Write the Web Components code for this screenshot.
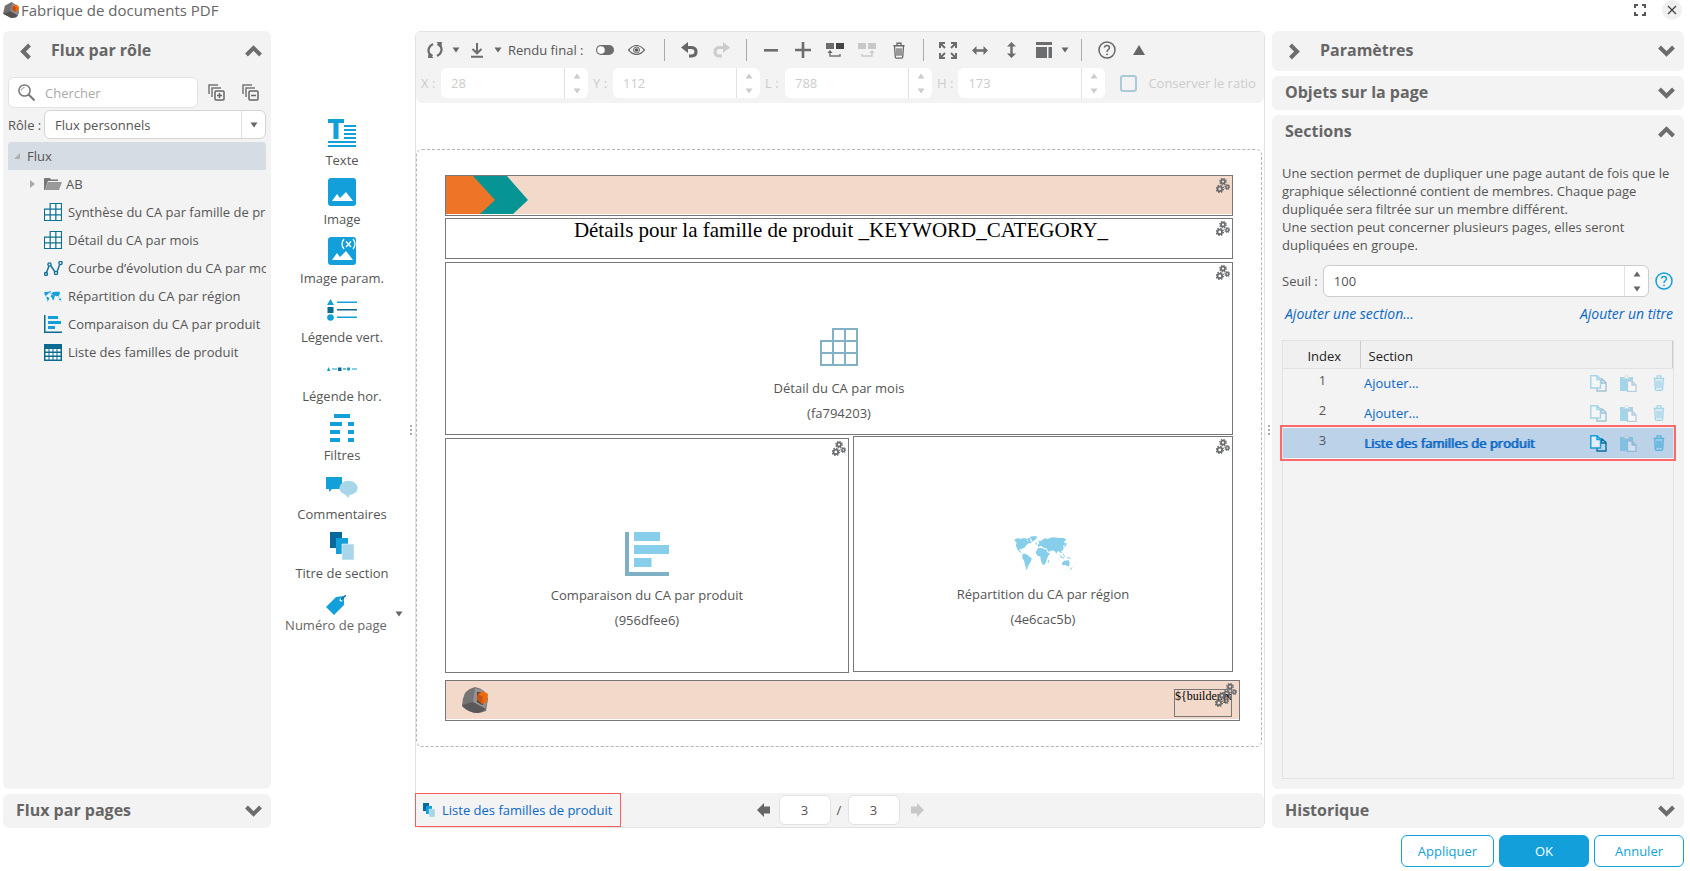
<!DOCTYPE html>
<html lang="fr">
<head>
<meta charset="utf-8">
<title>Fabrique de documents PDF</title>
<style>
  html { height: 100%; }
  body {
    margin: 0; min-height: 100%; background: #fff; color: #555;
    font: 13px/18px "Open Sans", sans-serif;
  }
</style>
</head>
<body>
<pdf-factory></pdf-factory>

<script>
const BLUE = '#129fda', DARK = '#0b6a92', GREY = '#6b6d6f';

const gear = (x, y, r, w) =>
  `<circle cx="${x}" cy="${y}" r="${r}" fill="none" stroke="currentColor" stroke-width="${w}"/>` +
  `<circle cx="${x}" cy="${y}" r="${r + w * .7}" fill="none" stroke="currentColor" stroke-width="${w * .8}" stroke-dasharray="${(r + w * .7) * Math.PI / 8}"/>`;

const WORLD = `<path d="M0 11 8 7 20 8 30 6 40 9 38 14 45 16 44 22 37 27 32 33 30 38 25 36 22 41 18 39 15 43 19 46 23 50 19 51 12 45 8 38 5 29 7 20 3 17z
 M46 3 60 0 70 2 66 9 58 15 54 17 52 9zM40 6 49 5 48 12 53 20 47 23 42 17z
 M25 54 34 54 41 58 53 68 50 77 46 84 41 92 39 102 36 101 33 89 30 76 24 66z
 M68 42 73 36 84 36 90 40 96 40 101 50 108 52 102 62 98 70 97 79 91 87 85 86 80 73 79 62 70 60 65 52z
 M104 71 106 74 104 82 101 81z M72 34 71 27 76 22 73 17 78 13 82 16 85 11 94 6 100 10 110 5 120 4 135 6 148 6 156 9 156 14 151 16 154 24 148 30 150 37 147 43 142 45 144 52 139 51 136 46 131 47 127 54 123 46 116 43 108 46 103 48 98 38 92 36 86 34 82 30 77 31z
 M156 20 159 22 157 29 153 34 151 31z M64 20 68 20 69 26 65 26z M137 55 144 63 151 66 149 69 140 64z M146 50 151 57 154 64 150 62z M158 63 170 67 172 70 163 68z
 M145 80 153 74 160 74 164 72 168 82 166 91 160 92 154 87 145 89z M168 101 177 93 175 98 170 103z"/>`;

const grid = (s, c) => `<g fill="#fff" fill-opacity=".7" stroke="${c}" stroke-width="${s}"><path d="M13 1H37V37H1V13H13zM1 25H37M13 13V37M25 1V37M13 13H37"/></g>`;

const SHEETS = (a, b, c) => `<path fill="${a}" d="M0 0h12v16H0z"/><path fill="${b}" d="M6 6h12v16H6z"/><path fill="${c}" stroke="#f3f7fa" stroke-width=".6" d="M12 12h12v16H12z"/>`;
const TRASH = `<path fill="none" stroke="currentColor" stroke-width="1.3" d="M.5 3.5h11M4 3V1h4v2M1.5 4l.8 11q.1.8 1 .8h5.4q.9 0 1-.8L10.500 4M4 6v7.500M6 6v7.500M8 6v7.500"/>`;
const MOUNT = `<rect width="28" height="28" rx="3" fill="${BLUE}"/><path fill="#fff" d="M4 23l5-7 3 4 6-6 7 9z"/>`;

/* name: [width, height, viewBox, markup] */
const ICONS = {
  logo: [16, 16, '0 0 26 26', `<path fill="#716f71" d="M3 6 14 0l10 7 2 11-4 6-8 2-14-7z"/><path fill="#8d8b8c" d="M12 15 15 1l9 6 2 4-2 12z"/><path fill="#545153" d="M0 19 12 15l12 7-3 3-8 1z"/><path fill="#eb6a10" d="M16 6l6-2 4 4-1 6-5 2-5-4z"/><path fill="#c04a10" d="M16 6l5 3-1 7-5-4z"/>`],
  logoBig: [26, 26, '0 0 26 26', `<path fill="#777476" d="M3 6Q6 2 13 0q5 1 9 4 3 4 4 8l-2 12q-5 2-10 2Q6 25 0 19 0 12 3 6z"/><path fill="#949293" d="M11 15 13 1l9 3 3 10-2 9z"/><path fill="#5b585a" d="M0 18 11 15l13 7q-4 3-8 4-8 0-15-6z"/><path fill="#544" d="M15 5h4l-3 8 6 4-2 1-5-3z"/><path fill="#eb6a10" d="M16 7l5-3 5 3-1 8-5 2-5-5z"/><path fill="#c8520f" d="M16 7l5 3-1 7-5-5z"/>`],
  full: [12, 12, '0 0 12 12', `<path fill="none" stroke="#555" stroke-width="2" d="M4 1H1v3M8 1h3v3M4 11H1V8M8 11h3V8"/>`],
  close: [10, 10, '0 0 10 10', `<path stroke="#444" stroke-width="1.300" d="M1 1l8 8M9 1L1 9"/>`],
  left: [11, 17, '0 0 11 17', `<path fill="none" stroke="${GREY}" stroke-width="4" d="M9.500 2 3 8.500l6.500 6.500"/>`],
  right: [11, 17, '0 0 11 17', `<path fill="none" stroke="${GREY}" stroke-width="4" d="M1.500 2 8 8.500l-6.500 6.500"/>`],
  up: [17, 12, '0 0 17 12', `<path fill="none" stroke="${GREY}" stroke-width="4" d="M1.500 10 8.500 3l7 7"/>`],
  down: [17, 12, '0 0 17 12', `<path fill="none" stroke="${GREY}" stroke-width="4" d="M1.500 2l7 7 7-7"/>`],
  search: [17, 17, '0 0 17 17', `<circle cx="6.500" cy="6.500" r="5.600" fill="none" stroke="#777" stroke-width="1.500"/><path fill="none" stroke="#999" d="M3.500 6.500q0-3 3-3"/><path stroke="#777" stroke-width="2" d="M10.500 10.500l6 6"/>`],
  expandAll: [17, 17, '0 0 17 17', `<path fill="none" stroke="#777" stroke-width="1.500" d="M1 10V1h9M4 13V4h9"/><rect x="7" y="7" width="9" height="9" rx="1" fill="none" stroke="#666" stroke-width="1.500"/><path stroke="#666" stroke-width="1.500" d="M9 11.500h5M11.500 9v5"/>`],
  collapseAll: [17, 17, '0 0 17 17', `<path fill="none" stroke="#777" stroke-width="1.500" d="M1 10V1h9M4 13V4h9"/><rect x="7" y="7" width="9" height="9" rx="1" fill="none" stroke="#666" stroke-width="1.500"/><path stroke="#666" stroke-width="1.500" d="M9 11.500h5"/>`],
  caret: [8, 6, '0 0 8 6', `<path fill="currentColor" d="M.5.500h7L4 5.500z"/>`],
  caretUp: [8, 6, '0 0 8 6', `<path fill="currentColor" d="M.5 5.500h7L4 .5z"/>`],
  opened: [6, 6, '0 0 6 6', `<path fill="#b0b0b0" d="M6 0v6H0z"/>`],
  closed: [5, 8, '0 0 5 8', `<path fill="#a8a8a8" d="M0 0l5 4-5 4z"/>`],
  folder: [18, 12, '0 0 18 12', `<path fill="#777" d="M0 1q0-1 1-1h5l1 1.500h7V3H4L1 12H0z"/><path fill="#999" d="M4 4h14l-3 8H1z"/>`],
  cube: [18, 18, '0 0 38 38', grid(2.600, '#0c7194')],
  cubeBig: [38, 38, '0 0 38 38', grid(2, '#82b1c6')],
  curve: [19, 15, '0 0 19 15', `<g fill="none" stroke="#0c7194" stroke-width="1.400"><path d="M2.500 11.500 5 5M7 5l4 6M13 11l2.500-7"/><circle cx="2" cy="13" r="1.500"/><circle cx="5.500" cy="3.500" r="1.600"/><circle cx="12" cy="12" r="1.600"/><circle cx="16.500" cy="2" r="1.600"/></g>`],
  world: [18, 11, '0 0 177 103', `<g fill="${BLUE}">${WORLD}</g>`],
  worldBig: [59, 34, '0 0 177 103', `<g fill="#87ceea">${WORLD}</g>`],
  bars: [18, 18, '0 0 18 18', `<path fill="${BLUE}" d="M4 1h10v3H4zM4 6h13v3H4zM4 11h7v3H4z"/><path fill="${DARK}" d="M0 0h1.500v16.500H18V18H0z"/>`],
  barsBig: [44, 44, '0 0 44 44', `<path fill="#87ceea" d="M9 0h26v9H9zM9 13h35v9H9zM9 26h17.500v9H9z"/><path fill="#7fb0c5" d="M0 0h4v40h40v4H0z"/>`],
  list: [18, 17, '0 0 18 17', `<rect width="18" height="17" fill="${DARK}"/><path fill="#fff" d="M1.500 5h3v2.500h-3zM5.500 5h3v2.500h-3zM9.500 5h3v2.500h-3zM13.500 5h3v2.500h-3zM1.500 9h3v2.500h-3zM5.500 9h3v2.500h-3zM9.500 9h3v2.500h-3zM13.500 9h3v2.500h-3zM1.500 13h3v2.500h-3zM5.500 13h3v2.500h-3zM9.500 13h3v2.500h-3zM13.500 13h3v2.500h-3z"/>`],
  text: [28, 28, '0 0 28 28', `<path fill="${BLUE}" d="M0 0h16v4h-5.500v16h-5V4H0zM16 6h12v2H16zM16 10h12v2H16zM16 14h12v2H16zM16 18h12v2H16zM0 22h28v2H0zM0 26h28v2H0z"/>`],
  image: [28, 28, '0 0 28 28', MOUNT],
  imageParam: [28, 28, '0 0 28 28', MOUNT + `<path fill="none" stroke="#fff" stroke-width="1.300" d="M16 2q-4 5 0 10M25 2q4 5 0 10M18 4.500l5 5.500M23 4.500l-5 5.500"/>`],
  legendV: [30, 22, '0 0 30 22', `<path fill="${BLUE}" d="M0 6 3.500 0 7 6zM10 2.500h20V4H10zM10 17.500h20V19H10z"/><path fill="${DARK}" d="M.5 8h6v6h-6zM10 10h20v1.500H10z"/><circle cx="3.500" cy="18.500" r="3.300" fill="${BLUE}"/>`],
  legendH: [30, 4, '0 0 30 4', `<path fill="${BLUE}" d="M0 4 1.500 0 3.500 4zM5 1.500h5v1H5zM25 1.500h5v1h-5z"/><path fill="${DARK}" d="M11 .5h3.500V4H11zM16 1.500h3v1h-3z"/><circle cx="21.500" cy="2" r="1.700" fill="${BLUE}"/>`],
  filters: [24, 28, '0 0 24 28', `<path fill="${BLUE}" d="M4 0h16v4H4zM0 8h12v4H0zM18 8h6v4h-6zM0 16h10v4H0zM18 16h6v4h-6zM0 24h10v4H0zM18 24h6v4h-6z"/>`],
  comments: [32, 21, '0 0 32 21', `<path fill="${BLUE}" d="M0 0h16v12H6l-3 3v-3H0z"/><ellipse cx="22.500" cy="11" rx="9.200" ry="7.200" fill="#a8d6e9"/><path fill="#a8d6e9" d="M19 17h5l-2 4z"/>`],
  sheets: [24, 28, '0 0 24 28', SHEETS('#0a689c', BLUE, '#a8d6e9')],
  sheetsSmall: [12, 14, '0 0 24 28', SHEETS('#0a689c', BLUE, '#a8d6e9')],
  tag: [20, 20, '0 0 20 20', `<path fill="${BLUE}" d="M10 2 18 1l0 9L8 20 0 12z"/><circle cx="15" cy="5" r="1.500" fill="#fff"/><path stroke="${DARK}" stroke-width="1.300" d="M15 5l5-5"/>`],
  refresh: [16, 16, '0 0 16 16', `<path fill="none" stroke="${GREY}" stroke-width="2.200" d="M5.500 14Q0 11 2 6q1-2.500 4-4M10.500 2q5.500 3 3.500 8-1 2.500-4 4"/><path fill="${GREY}" d="M9.500 0H15l-.5 5.500zM6.500 16H1l.5-5.500z"/>`],
  download: [12, 16, '0 0 12 16', `<path fill="none" stroke="${GREY}" stroke-width="2" d="M6 1v10M1.500 7 6 11.300 10.500 7M0 14.800h12"/>`],
  toggle: [18, 10, '0 0 18 10', `<rect width="18" height="10" rx="5" fill="${GREY}"/><circle cx="5" cy="5" r="3.800" fill="#fff"/>`],
  eye: [17, 10, '0 0 17 10', `<path fill="none" stroke="#666" stroke-width="1.200" d="M.5 5q8-9 16 0-8 9-16 0z"/><circle cx="8.500" cy="5" r="3" fill="none" stroke="#666"/><circle cx="8.500" cy="5" r="1.800" fill="#555"/>`],
  undo: [17, 16, '0 0 17 16', `<path fill="none" stroke="currentColor" stroke-width="3.200" d="M5 5.500h5.500q4.500.3 4.500 4.200T10.500 14H8"/><path fill="currentColor" d="M0 5.500 7 0v11z"/>`],
  redo: [17, 16, '0 0 17 16', `<path fill="none" stroke="#ccc" stroke-width="3.200" d="M12 5.500H6.500Q2 5.800 2 9.700T6.500 14H9"/><path fill="#ccc" d="M17 5.500 10 0v11z"/>`],
  minus: [14, 3, '0 0 14 3', `<path fill="${GREY}" d="M0 0h14v2.600H0z"/>`],
  plus: [16, 16, '0 0 16 16', `<path fill="${GREY}" d="M6.700 0h2.600v6.700H16v2.600H9.300V16H6.700V9.300H0V6.700h6.700z"/>`],
  group: [18, 14, '0 0 18 14', `<path fill="#6b6d6f" d="M0 0h8v6H0z"/><path fill="#444" d="M10 0h8v6h-8z"/><path fill="none" stroke="#777" stroke-width="1.500" d="M4 8v5h10v-2"/><path fill="#666" d="M1.500 10 4 7l2.500 3z"/>`],
  ungroup: [18, 14, '0 0 18 14', `<path fill="#c8c8c8" d="M0 0h8v6H0zM10 0h8v6h-8z"/><path fill="none" stroke="#ccc" stroke-width="1.500" d="M4 11v2h10V9"/><path fill="#c8c8c8" d="M11.500 10 14 7l2.500 3z"/>`],
  trash: [12, 17, '0 0 12 16.500', TRASH],
  expand: [18, 17, '0 0 18 17', `<path fill="none" stroke="${GREY}" stroke-width="2" d="M6 1H1v5M12 1h5v5M1 11v5h5M17 11v5h-5M1 1l5 5M17 1l-5 5M1 16l5-5M17 16l-5-5"/>`],
  horiz: [16, 9, '0 0 16 9', `<path fill="${GREY}" d="M0 4.500 4.500 0v3.300h7V0L16 4.500 11.500 9V5.700h-7V9z"/>`],
  vert: [9, 16, '0 0 9 16', `<path fill="${GREY}" d="M4.500 0 9 4.500H5.700v7H9L4.500 16 0 11.500h3.300v-7H0z"/>`],
  layout: [16, 16, '0 0 16 16', `<path fill="${GREY}" d="M0 0h16v3H0zM0 5h11v11H0zM12.500 5H16v11h-3.500z"/>`],
  help: [18, 18, '0 0 18 18', `<circle cx="9" cy="9" r="8" fill="none" stroke="currentColor" stroke-width="1.500"/><path fill="none" stroke="currentColor" stroke-width="1.500" d="M6.500 6.500Q6.700 4.500 9 4.500t2.400 2Q11.400 8 10 9q-1 .7-1 2"/><circle cx="9" cy="13.300" r=".9" fill="currentColor"/>`],
  triangle: [12, 10, '0 0 12 10', `<path fill="#666" d="M6 0l6 10H0z"/>`],
  gears: [14, 15, '0 0 14 15', gear(7, 3.600, 2, 1.700) + gear(3.800, 10.900, 2.300, 1.800) + gear(11.300, 9, 1.500, 1.400)],
  prev: [13, 14, '0 0 13 14', `<path fill="#666" d="M0 7 7 0v3.500h6v7H7V14z"/>`],
  next: [13, 14, '0 0 13 14', `<path fill="#c8c8c8" d="M13 7 6 0v3.500H0v7h6V14z"/>`],
  copy: [17, 17, '0 0 17 17', `<path fill="none" stroke="#0b6f9c" stroke-width="1.400" d="M7 13v3h9V7.500L12 4h-2M11.500 4.500V8H16"/><path fill="#fff" fill-opacity=".6" stroke="${BLUE}" stroke-width="1.400" d="M.8.800H7l3.500 3.500V13H.8zM7 1v3.500h3.500"/>`],
  paste: [17, 17, '0 0 17 17', `<path fill="${BLUE}" d="M0 2h13v14H0z"/><path fill="#fff" stroke="#9ab" d="M3.500 3.500q0-1 1.500-1Q5 .5 6.500.5T8 2.500q1.500 0 1.500 1z"/><path fill="#fff" stroke="#4a8cb0" stroke-width="1.300" d="M7.500 6H12l4 4v6.300H7.500zM12 6v4h4"/>`],
  trashBlue: [12, 16, '0 0 12 16.500', `<g color="${BLUE}">${TRASH}</g><path fill="${BLUE}" fill-opacity=".25" d="M2 4h8v11H2z"/>`],
};

/* Registers an element whose open shadow root is filled by view(el). */
function element(name, css, view) {
  customElements.define(name, class extends HTMLElement {
    constructor() { super(); this.attachShadow({ mode: 'open' }); }
    connectedCallback() {
      const t = document.createElement('template');
      t.innerHTML = `<style>*{box-sizing:border-box}:host([hidden]){display:none}
        button,input,select{font:inherit;color:inherit;margin:0;border:0;background:none;padding:0;outline:0}
        a{color:#0a68c6;text-decoration:none}${css}</style>${view(this)}`;
      this.shadowRoot.replaceChildren(t.content.cloneNode(true));
    }
  });
}
const at = (el, n, d = '') => el.getAttribute(n) ?? d;

element('ui-icon', `:host{display:inline-flex;flex:none}svg{display:block}`, el => {
  const [w, h, box, body] = ICONS[at(el, 'name')];
  return `<svg width="${w}" height="${h}" viewBox="${box}" aria-hidden="true">${body}</svg>`;
});

element('icon-button', `
  :host{display:flex;flex:none;width:32px;height:32px}
  :host([slim]){width:10px}
  :host([fit]){width:auto;height:auto}
  button{flex:1;display:flex;align-items:center;justify-content:center;border-radius:50%}`,
  el => `<button type="button" aria-label="${at(el, 'label')}"><ui-icon name="${at(el, 'name')}"></ui-icon></button>`);

element('side-panel', `
  :host{display:flex;flex-direction:column;background:#f3f3f3;border-radius:6px}
  :host([grow]){flex:1}
  header{display:flex;align-items:center;height:34px;padding:0 9px 0 13px}
  header.lead{height:40px;padding-left:17px}
  .lead icon-button:first-child{width:11px;margin-right:20px}
  h2{flex:1;margin:0;padding-bottom:2px;font-size:16px;line-height:24px;font-weight:700;color:#666}`,
  el => `<header class="${at(el, 'lead') ? 'lead' : ''}">${at(el, 'lead') ? `<icon-button name="${at(el, 'lead')}" label="Déplacer"></icon-button>` : ''}
    <h2>${at(el, 'heading')}</h2><icon-button fit name="${el.hasAttribute('open') ? 'up' : 'down'}" label="Plier ou déplier"></icon-button></header><slot></slot>`);

element('number-field', `
  :host{display:flex;align-items:center;gap:5px}
  label{min-width:15px}
  .box{display:flex;flex:1;width:147px;height:30px;background:#fff;border-radius:6px;overflow:hidden}
  input{flex:1;min-width:0;padding:0 10px}
  .steps{width:24px;display:flex;flex-direction:column;border-left:1px solid #e2e2e2}
  .steps button{flex:1;display:flex;align-items:center;justify-content:center;color:#666}
  :host([disabled]){color:#ccc}
  :host([disabled]) button{color:#ccc}
  :host([framed]) .box{height:32px;border:1px solid #ccc}`,
  el => { const d = el.hasAttribute('disabled') ? 'disabled' : '';
    return `<label for="v">${at(el, 'label')}</label><div class="box"><input id="v" type="text" inputmode="numeric" value="${at(el, 'value')}" ${d}>
    <div class="steps"><button type="button" aria-label="Plus" ${d}><ui-icon name="caretUp"></ui-icon></button><button type="button" aria-label="Moins" ${d}><ui-icon name="caret"></ui-icon></button></div></div>`; });

element('flow-tree', `
  :host{display:block;margin:0 5px 0 5px}
  .root{display:flex;align-items:center;gap:7px;height:28px;padding-left:6px;background:#d6dce4;border-radius:4px 4px 0 0}
  ul{list-style:none;margin:0;padding:0}
  li{display:grid;grid-template-columns:20px 24px 1fr;align-items:center;height:28px;padding-left:16px}
  li.folder{grid-template-columns:5px 9px 22px 1fr;padding-left:22px}
  li ui-icon.ic{justify-self:start}
  span{white-space:nowrap;overflow:hidden}`,
  () => `<div class="root"><ui-icon name="opened"></ui-icon><span>Flux</span></div><ul>
    <li class="folder"><ui-icon name="closed"></ui-icon><i></i><ui-icon name="folder"></ui-icon><span>AB</span></li>
    ${[['cube', 'Synthèse du CA par famille de produit'], ['cube', 'Détail du CA par mois'], ['curve', 'Courbe d’évolution du CA par mois'], ['world', 'Répartition du CA par région'], ['bars', 'Comparaison du CA par produit'], ['list', 'Liste des familles de produit']]
      .map(([i, t]) => `<li><i></i><ui-icon class="ic" name="${i}"></ui-icon><span>${t}</span></li>`).join('')}</ul>`);

element('flow-browser', `
  :host{display:flex;flex-direction:column;gap:5px;width:268px;flex:none}
  .search{display:flex;align-items:center;margin:6px 5px 2px}
  .box{display:flex;align-items:center;gap:10px;width:190px;height:31px;padding-left:9px;background:#fff;border:1px solid #e2e2e2;border-radius:6px;margin-right:10px}
  input{flex:1;min-width:0}
  input::placeholder{color:#aaa;opacity:1}
  .search icon-button+icon-button{margin-left:17px}
  .role{display:flex;align-items:center;justify-content:space-between;margin:0 5px 3px;height:29px}
  .pick{display:grid;grid-template-columns:1fr 24px;width:222px;height:29px;background:#fff;border:1px solid #d4d4d4;border-radius:6px;align-items:center}
  select{grid-area:1/1/2/3;appearance:none;width:100%;height:27px;padding-left:10px}
  .arrow{grid-area:1/2;height:27px;display:flex;align-items:center;justify-content:center;border-left:1px solid #e0e0e0;pointer-events:none;color:#666}`,
  () => `<side-panel grow open lead="left" heading="Flux par rôle">
    <div class="search"><div class="box"><ui-icon name="search"></ui-icon><input type="text" placeholder="Chercher" aria-label="Chercher"></div>
      <icon-button fit name="expandAll" label="Tout déplier"></icon-button><icon-button fit name="collapseAll" label="Tout replier"></icon-button></div>
    <div class="role"><label for="role">Rôle :</label><div class="pick"><select id="role"><option>Flux personnels</option></select><span class="arrow"><ui-icon name="caret"></ui-icon></span></div></div>
    <flow-tree></flow-tree></side-panel>
    <side-panel heading="Flux par pages"></side-panel>`);

element('palette-item', `
  :host{display:block}
  button{display:flex;flex-direction:column;align-items:center;width:100%;height:59px}
  .ic{display:flex;align-items:center;height:32px;margin-bottom:2px}
  :host([compact]) button{height:48px;padding-top:6px}
  :host([compact]) .ic{height:20px;margin-bottom:1px}`,
  el => `<button type="button"><span class="ic"><ui-icon name="${at(el, 'icon')}"></ui-icon></span><span><slot></slot></span></button>`);

element('tool-palette', `
  :host{display:block;width:136px;flex:none;padding:86px 0 0 6px}
  .last{display:flex;justify-content:center;gap:8px;padding-left:4px;color:#666}
  .last icon-button{height:6px;margin-top:22px}`,
  () => [['text', 'Texte'], ['image', 'Image'], ['imageParam', 'Image param.'], ['legendV', 'Légende vert.'], ['legendH', 'Légende hor.'], ['filters', 'Filtres'], ['comments', 'Commentaires'], ['sheets', 'Titre de section']]
    .map(([i, t]) => `<palette-item icon="${i}">${t}</palette-item>`).join('') +
    `<div class="last"><palette-item compact icon="tag">Numéro de page</palette-item><icon-button fit name="caret" label="Autres"></icon-button></div>`);

element('split-handle', `
  :host{display:flex;flex:none;width:8px;flex-direction:column;align-items:center;justify-content:center;gap:2px}
  :host([thin]){width:7px}
  i{width:2px;height:2px;background:#aaa}`, () => `<i></i><i></i><i></i>`);

element('editor-toolbar', `
  :host{display:block;background:#f3f3f3;border-radius:6px;padding:2px 3px 5px;color:#666}
  .row{display:flex;align-items:center}
  .row+.row{padding:2px 2px 0;gap:5px}
  .txt{margin:0 5px;color:#555}
  hr{width:1px;height:22px;margin:0 8px;border:0;background:#aaa;flex:none}
  hr.wide{margin:0 9px 0 11px}
  .ratio{display:flex;align-items:center;gap:11px;margin-left:10px;color:#ccc;white-space:nowrap}
  input{appearance:none;width:17px;height:17px;border:2px solid #a9cbd9;border-radius:3px}`,
  () => `<div class="row">
    <icon-button name="refresh" label="Actualiser"></icon-button><icon-button slim name="caret" label="Options"></icon-button>
    <icon-button name="download" label="Télécharger"></icon-button><icon-button slim name="caret" label="Options"></icon-button>
    <span class="txt">Rendu final :</span><icon-button name="toggle" label="Rendu final"></icon-button><icon-button name="eye" label="Aperçu"></icon-button><hr class="wide">
    <icon-button name="undo" label="Annuler l’action"></icon-button><icon-button name="redo" label="Rétablir"></icon-button><hr>
    <icon-button name="minus" label="Réduire"></icon-button><icon-button name="plus" label="Agrandir"></icon-button><icon-button name="group" label="Grouper"></icon-button><icon-button name="ungroup" label="Dégrouper"></icon-button><icon-button name="trash" label="Supprimer"></icon-button><hr>
    <icon-button name="expand" label="Ajuster"></icon-button><icon-button name="horiz" label="Largeur"></icon-button><icon-button name="vert" label="Hauteur"></icon-button><icon-button name="layout" label="Disposition"></icon-button><icon-button slim name="caret" label="Options"></icon-button><hr class="wide">
    <icon-button name="help" label="Aide"></icon-button><icon-button name="triangle" label="Replier"></icon-button></div>
    <div class="row"><number-field disabled label="X :" value="28"></number-field><number-field disabled label="Y :" value="112"></number-field><number-field disabled label="L :" value="788"></number-field><number-field disabled label="H :" value="173"></number-field>
    <span class="ratio"><input type="checkbox" id="ratio" disabled><label for="ratio">Conserver le ratio</label></span></div>`);

/* An object placed on the document page; its box is x, y, width and height on the page. */
customElements.define('page-object', class extends HTMLElement {
  constructor() { super(); this.attachShadow({ mode: 'open' }); }
  connectedCallback() {
    const [x, y, w, h] = this.getAttribute('box').split(' ');
    const icon = this.getAttribute('icon');
    this.shadowRoot.innerHTML = `<style>
      :host{position:absolute;box-sizing:border-box;left:${x}px;top:${y}px;width:${w}px;height:${h}px;border:1px solid #777;display:block}
      .gears{position:absolute;top:2px;right:2px;color:#6b6d6f}
      .clip{height:100%;overflow:hidden}
      .body{box-sizing:border-box;height:100%;padding-top:54px;display:flex;flex-direction:column;align-items:center;justify-content:center;line-height:25px}
      .ic{height:44px;margin-bottom:7px;display:flex;align-items:center}</style>
      ${icon ? `<div class="body"><span class="ic"><ui-icon name="${icon}"></ui-icon></span><span>${this.getAttribute('label')}</span><span>(${this.getAttribute('ref')})</span></div>` : '<div class="clip"><slot></slot></div>'}
      <ui-icon class="gears" name="gears"></ui-icon>`;
  }
});

element('document-page', `
  :host{display:block;position:relative;width:846px;height:598px;flex:none;border:1px dashed #b4b4b4;border-radius:6px;box-sizing:border-box}
  .band{height:38px;background:#f2d9ca}
  .band svg{display:block}
  .foot{padding:6px 0 0 16px;height:38px}
  .title{font:21px/22px "Liberation Serif",serif;color:#000;text-align:center;padding-left:4px}
  .code{font:12px/12px "Liberation Serif",serif;color:#000;white-space:nowrap}`,
  () => `<page-object box="28 25 788 41"><div class="band"><svg width="84" height="38" viewBox="0 0 84 38"><path fill="#069494" d="M27 0h34l21 24-15 14H30z"/><path fill="#ee7427" d="M0 0h27l22 24-15 14H0z"/></svg></div></page-object>
    <page-object box="28 68 788 41"><div class="title">Détails pour la famille de produit _KEYWORD_CATEGORY_</div></page-object>
    <page-object box="28 112 788 173" icon="cubeBig" label="Détail du CA par mois" ref="fa794203"></page-object>
    <page-object box="28 288 404 235" icon="barsBig" label="Comparaison du CA par produit" ref="956dfee6"></page-object>
    <page-object box="436 286 380 236" icon="worldBig" label="Répartition du CA par région" ref="4e6cac5b"></page-object>
    <page-object box="28 530 795 41"><div class="band foot"><ui-icon name="logoBig"></ui-icon></div></page-object>
    <page-object box="757 539 58 28"><div class="code">\${builder.page}</div></page-object>`);

element('page-bar', `
  :host{display:grid;grid-template-columns:1fr auto 1fr;align-items:center;height:34px;background:#f3f3f3;border-radius:0 6px 6px 0}
  .section{justify-self:start;display:flex;align-items:center;gap:7px;height:32px;width:204px;padding-left:7px;outline:1px solid #fb5d5d}
  .nav{display:flex;align-items:center}
  .nav input{width:52px;height:30px;background:#fff;border:1px solid #e2e2e2;border-radius:6px;text-align:center}
  .nav icon-button{width:13px}
  .slash{width:17px;text-align:center}
  .before{margin-right:9px}
  .after{margin-left:11px}`,
  () => `<a class="section" href="#section"><ui-icon name="sheetsSmall"></ui-icon><span>Liste des familles de produit</span></a>
    <div class="nav"><icon-button class="before" name="prev" label="Page précédente"></icon-button><input type="text" value="3" aria-label="Page"><span class="slash">/</span><input type="text" value="3" aria-label="Nombre de pages"><icon-button class="after" name="next" label="Page suivante"></icon-button></div>`);

element('document-editor', `
  :host{display:flex;flex-direction:column;flex:1;min-width:0;border:1px solid #e2e2e2;border-radius:6px}
  .stage{flex:1;display:flex;align-items:center;justify-content:flex-start}`,
  () => `<editor-toolbar></editor-toolbar><div class="stage"><document-page></document-page></div><page-bar></page-bar>`);

element('section-table', `
  :host{display:flex;flex-direction:column;flex:1;border:1px solid #e2e2e2;min-height:120px}
  table{width:100%;border-collapse:collapse;table-layout:fixed}
  th{height:27px;padding:3px 8px 0;font-weight:400;text-align:left;color:#222;background:#f0f0f0;border-bottom:1px solid #e0e0e0;border-right:1px solid #ccc}
  th:first-child{width:77px;text-align:center;padding:3px 0 0 6px}
  td{height:30px;padding:0 0 0 4px;vertical-align:middle}
  td:first-child{text-align:center;padding:0 0 6px 2px}
  .line{display:flex;align-items:center}
  .line a{flex:1}
  .line icon-button{width:17px;margin-left:13px}
  .line icon-button:last-child{width:12px;margin:0 8px 0 16px}
  .off{opacity:.35}.mid{opacity:.6}
  .on{background:#bbd2e8;outline:2px solid #fa6a6a;outline-offset:1px}
  .on a{text-shadow:1px 0 #0a68c6}`,
  () => { const row = (n, t, on) => `<tr class="${on ? 'on' : ''}"><td>${n}</td><td><div class="line"><a href="#s${n}">${t}</a>
      <icon-button fit class="${on ? '' : 'off'}" name="copy" label="Copier"></icon-button><icon-button fit class="off" name="paste" label="Coller"></icon-button><icon-button fit class="${on ? 'mid' : 'off'}" name="trashBlue" label="Supprimer"></icon-button></div></td></tr>`;
    return `<table><thead><tr><th>Index</th><th>Section</th></tr></thead><tbody>${row(1, 'Ajouter...')}${row(2, 'Ajouter...')}${row(3, 'Liste des familles de produit', true)}</tbody></table>`; });

element('settings-column', `
  :host{display:flex;flex-direction:column;gap:5px;width:412px;flex:none}
  .body{flex:1;display:flex;flex-direction:column;padding:15px 10px 10px 10px}
  p{margin:0}
  .seuil{display:flex;align-items:center;margin:11px 1px 0 0;gap:6px;color:#129fda}
  .seuil number-field{flex:1;gap:5px;color:#555}
  .links{display:flex;justify-content:space-between;font-size:14px;font-style:italic;margin:8px 1px 17px 3px}`,
  () => `<side-panel lead="right" heading="Paramètres"></side-panel>
    <side-panel heading="Objets sur la page"></side-panel>
    <side-panel grow open heading="Sections"><div class="body">
      <p>Une section permet de dupliquer une page autant de fois que le graphique sélectionné contient de membres. Chaque page dupliquée sera filtrée sur un membre différent.</p>
      <p>Une section peut concerner plusieurs pages, elles seront dupliquées en groupe.</p>
      <div class="seuil"><number-field framed label="Seuil :" value="100"></number-field><icon-button fit name="help" label="Aide"></icon-button></div>
      <div class="links"><a href="#ajouter">Ajouter une section...</a><a href="#titre">Ajouter un titre</a></div>
      <section-table></section-table></div></side-panel>
    <side-panel heading="Historique"></side-panel>`);

element('dialog-button', `
  :host{display:block}
  button{min-width:90px;padding:0 16px;height:32px;border:1px solid #129fda;border-radius:6px;background:#fff;color:#129fda}
  :host([primary]) button{background:#129fda;color:#fff}`,
  () => `<button type="button"><slot></slot></button>`);

element('pdf-factory', `
  :host{display:flex;flex-direction:column;min-height:100vh;box-sizing:border-box;padding:0 6px 4px 3px}
  .bar{display:flex;align-items:center;height:31px;gap:2px;padding-bottom:11px}
  h1{flex:1;margin:0;font-size:15px;line-height:20px;font-weight:400;color:#666}
  .bar icon-button{width:20px;height:20px;border-radius:50%}
  .bar .x{margin-left:10px;margin-right:2px;background:#f0f0f0}
  main{flex:1;display:flex}
  footer{display:flex;justify-content:flex-end;gap:5px;padding-top:7px}`,
  () => `<header class="bar"><ui-icon name="logo"></ui-icon><h1>Fabrique de documents PDF</h1><icon-button fit name="full" label="Plein écran"></icon-button><icon-button class="x" name="close" label="Fermer"></icon-button></header>
    <main><flow-browser></flow-browser><tool-palette></tool-palette><split-handle></split-handle><document-editor></document-editor><split-handle thin></split-handle><settings-column></settings-column></main>
    <footer><dialog-button>Appliquer</dialog-button><dialog-button primary>OK</dialog-button><dialog-button>Annuler</dialog-button></footer>`);
</script>
</body>
</html>
